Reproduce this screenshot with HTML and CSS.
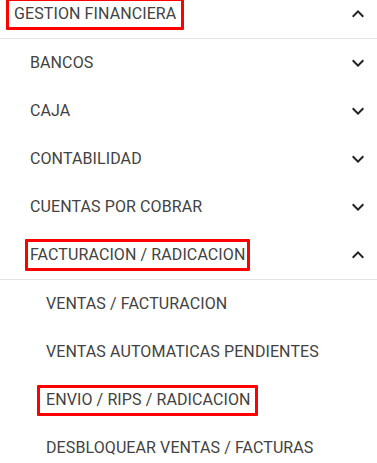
FILE: index.html
```html
<!DOCTYPE html>
<html lang="es">
<head>
<meta charset="utf-8">
<title>Gestión financiera</title>
<link rel="stylesheet" href="styles.css">
</head>
<body>
<nav class="menu">
  <div class="row head">
    <span class="label mark mark-head">GESTION FINANCIERA</span>
    <svg class="chev" viewBox="0 0 24 24"><path d="M12 8l-6 6 1.41 1.41L12 10.83l4.59 4.58L18 14z"/></svg>
  </div>
  <ul class="list lvl1">
    <li class="row"><span class="label">BANCOS</span><svg class="chev" viewBox="0 0 24 24"><path d="M16.59 8.59L12 13.170 7.41 8.59 6 10l6 6 6-6z"/></svg></li>
    <li class="row"><span class="label">CAJA</span><svg class="chev" viewBox="0 0 24 24"><path d="M16.59 8.59L12 13.17 7.41 8.59 6 10l6 6 6-6z"/></svg></li>
    <li class="row"><span class="label">CONTABILIDAD</span><svg class="chev" viewBox="0 0 24 24"><path d="M16.59 8.59L12 13.17 7.41 8.59 6 10l6 6 6-6z"/></svg></li>
    <li class="row"><span class="label">CUENTAS POR COBRAR</span><svg class="chev" viewBox="0 0 24 24"><path d="M16.59 8.59L12 13.17 7.41 8.59 6 10l6 6 6-6z"/></svg></li>
    <li class="row open"><span class="label mark mark-fact">FACTURACION / RADICACION</span><svg class="chev" viewBox="0 0 24 24"><path d="M12 8l-6 6 1.41 1.41L12 10.83l4.59 4.58L18 14z"/></svg></li>
  </ul>
  <ul class="list lvl2">
    <li class="row"><span class="label">VENTAS / FACTURACION</span></li>
    <li class="row"><span class="label">VENTAS AUTOMATICAS PENDIENTES</span></li>
    <li class="row"><span class="label mark mark-envio">ENVIO / RIPS / RADICACION</span></li>
    <li class="row"><span class="label">DESBLOQUEAR VENTAS / FACTURAS</span></li>
  </ul>
</nav>
</body>
</html>
```
FILE: styles.css
```css
html, body {
  margin: 0;
  padding: 0;
  background: #fff;
}
body {
  font-family: Roboto, "Liberation Sans", sans-serif;
  font-size: 16px;
  color: #424242;
  overflow: hidden;
}
.menu {
  width: 377px;
}
.list {
  list-style: none;
  margin: 0;
  padding: 0;
}
.row {
  display: flex;
  align-items: center;
  justify-content: space-between;
  height: 48px;
  padding-right: 7px;
}
.head {
  height: 28px;
  padding-bottom: 10px;
  padding-left: 14px;
  border-bottom: 1px solid #e3e3e3;
}
.lvl1 .row {
  padding-left: 30px;
}
.lvl1 .open {
  border-bottom: 1px solid #e3e3e3;
}
.lvl2 .row {
  padding-left: 46px;
}
.label {
  line-height: 20px;
  letter-spacing: 0.1px;
  white-space: nowrap;
}
.chev {
  width: 24px;
  height: 24px;
  flex: none;
  fill: #222;
}
.mark {
  position: relative;
}
.mark::after {
  content: "";
  position: absolute;
  border: 3px solid #f00;
  border-radius: 1px;
}
.mark-head::after {
  left: -8px;
  right: -8px;
  top: -6px;
  bottom: -6px;
}
.mark-fact::after {
  left: -5px;
  right: -5px;
  top: -6px;
  bottom: -6px;
}
.mark-envio::after {
  left: -9px;
  right: -7px;
  top: -5px;
  bottom: -6px;
}
```
